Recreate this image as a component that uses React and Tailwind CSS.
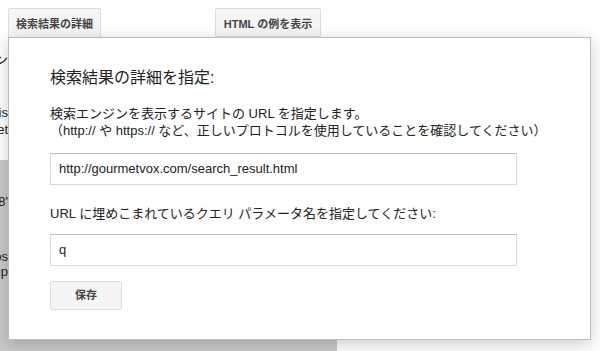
export default function App() {
  const font = { fontFamily: '"Liberation Sans", Arial, "Noto Sans CJK JP", sans-serif' };
  return (
    <div className="relative w-[600px] h-[351px] overflow-hidden bg-white text-[#222]" style={font}>
      {/* page behind the dialog */}
      <div className="flex flex-col h-full">
        <div className="flex items-start h-[38px] pt-[8px] pl-[8px]">
          <div className="w-[93px] h-[30px] flex justify-center pt-[7px] bg-[#f5f5f5] border border-[#dcdcdc] rounded-[2px] text-[11px] font-bold text-[#444]">
            検索結果の詳細
          </div>
          <div className="ml-[114px] w-[106px] h-[29px] flex justify-center pt-[7px] bg-[#f5f5f5] border border-[#dcdcdc] rounded-[2px] text-[11px] font-bold text-[#444]">
            HTML の例を表示
          </div>
        </div>
        <div className="h-[122px] w-[8px] overflow-hidden flex flex-col items-end text-[13px] leading-[16px] whitespace-nowrap">
          <div className="mt-[14px]">リン</div>
          <div className="mt-[37px]">This</div>
          <div className="mt-[1px]">Det</div>
        </div>
        <div className="flex-1 w-[337px] bg-[#c9c9c9]">
          <div className="w-[8px] overflow-hidden flex flex-col items-end text-[13px] leading-[16px] whitespace-nowrap">
            <div className="mt-[34px]">18'</div>
            <div className="mt-[39px]">Pos</div>
            <div className="mt-[-1px]">Sup</div>
          </div>
        </div>
      </div>

      {/* dialog */}
      <div className="absolute left-[8px] top-[37px] w-[583px] h-[303px] bg-white border border-[#bdbdbd] shadow-[0_4px_16px_rgba(0,0,0,0.2)] pl-[41px] pt-[30px]">
        <div className="text-[16px] leading-[20px] text-[#222]">検索結果の詳細を指定:</div>
        <div className="mt-[17px] text-[13px] leading-[17px] text-[#222]">
          <div>検索エンジンを表示するサイトの URL を指定します。</div>
          <div>（http:// や https:// など、正しいプロトコルを使用していることを確認してください）</div>
        </div>
        <div className="mt-[14px] w-[467px] h-[32px] border border-[#d9d9d9] border-t-[#c0c0c0] flex items-center pl-[8px] text-[13px] text-[#222]">
          http://gourmetvox.com/search_result.html
        </div>
        <div className="mt-[20px] text-[13px] leading-[17px] text-[#222]">
          URL に埋めこまれているクエリ パラメータ名を指定してください:
        </div>
        <div className="mt-[12px] w-[467px] h-[32px] border border-[#d9d9d9] border-t-[#c0c0c0] flex items-center pl-[8px] text-[13px] text-[#222]">
          q
        </div>
        <div className="mt-[15px] w-[72px] h-[29px] bg-[#f5f5f5] border border-[#dcdcdc] rounded-[2px] flex items-center justify-center text-[11px] font-bold text-[#444]">
          保存
        </div>
      </div>
    </div>
  );
}
